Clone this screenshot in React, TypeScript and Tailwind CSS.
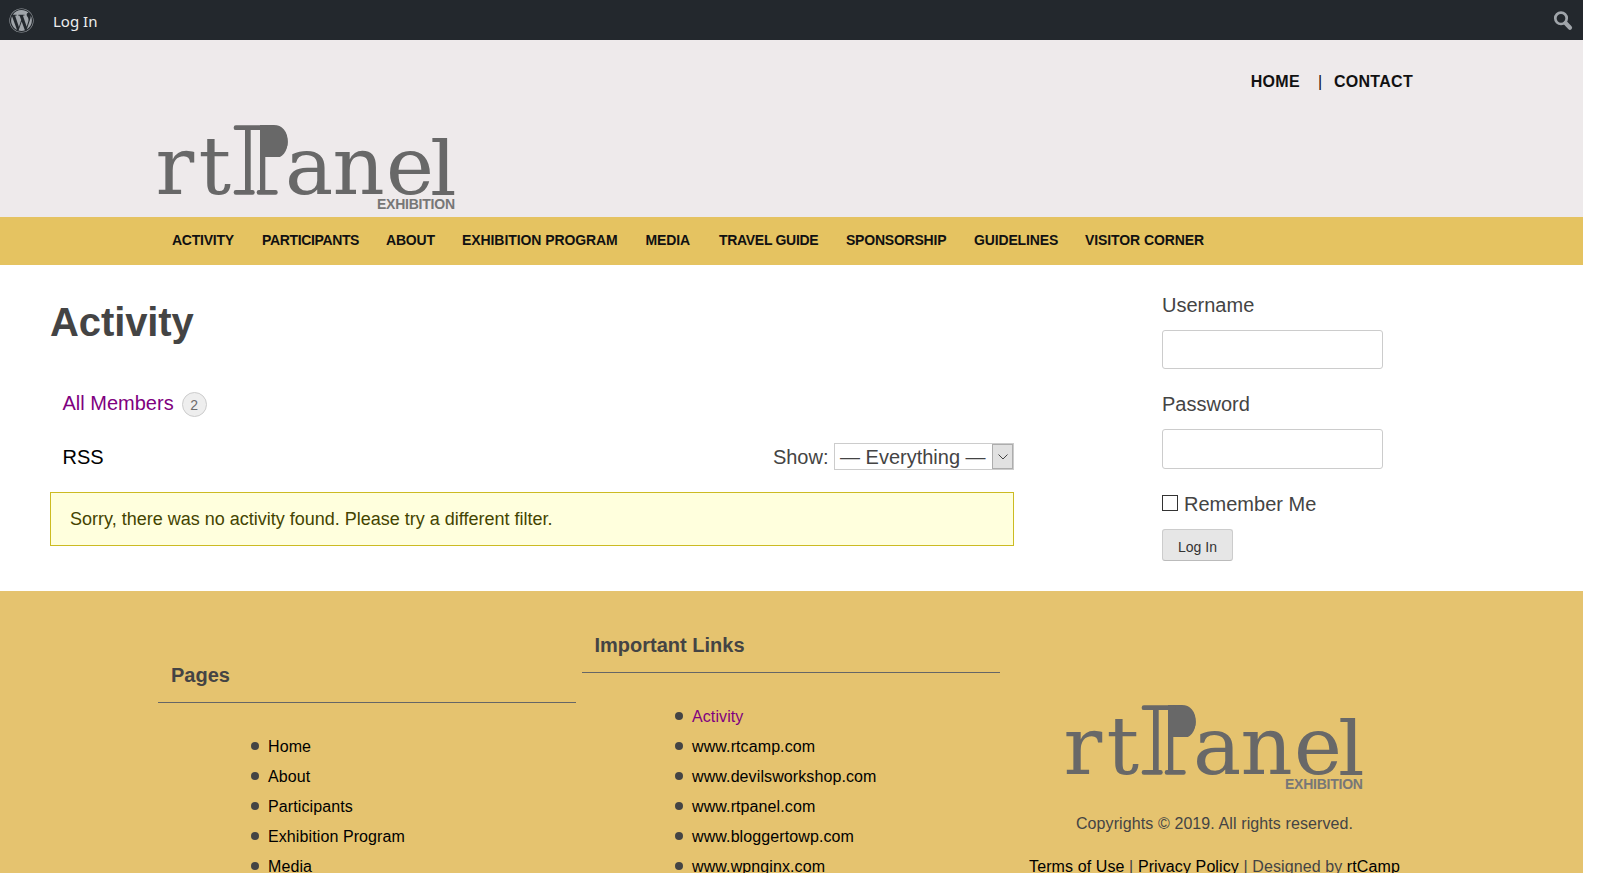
import { FaWordpress } from "react-icons/fa6";

const navItems = [
  { label: "ACTIVITY", style: "w-[90px] tracking-[-0.25px]" },
  { label: "PARTICIPANTS", style: "w-[124px] tracking-[-0.36px]" },
  { label: "ABOUT", style: "w-[76px] tracking-[-0.2px]" },
  { label: "EXHIBITION PROGRAM", style: "w-[183.5px] tracking-[-0.08px]" },
  { label: "MEDIA", style: "w-[73.5px] tracking-[-0.1px]" },
  { label: "TRAVEL GUIDE", style: "w-[127px] tracking-[-0.3px]" },
  { label: "SPONSORSHIP", style: "w-[128px] tracking-[-0.22px]" },
  { label: "GUIDELINES", style: "w-[111px] tracking-[-0.15px]" },
  { label: "VISITOR CORNER", style: "w-[130px] tracking-[-0.09px]" },
];

const pages = ["Home", "About", "Participants", "Exhibition Program", "Media"];

const links = [
  "Activity",
  "www.rtcamp.com",
  "www.devilsworkshop.com",
  "www.rtpanel.com",
  "www.bloggertowp.com",
  "www.wpnginx.com",
];

function Logo({ id }: { id: string }) {
  return (
    <svg width="298" height="86" viewBox="0 0 298 86" className="block shrink-0 overflow-visible" fill="#686868">
      <clipPath id={id}>
        <rect x="102" y="-10" width="60" height="42" />
      </clipPath>
      <g fontFamily="'DejaVu Serif', serif" fontSize="81">
        <text x="-2.5 40.5" y="69.3">rt</text>
        <text x="127 174.5 228" y="69.3">ane</text>
        <text x="0" y="0" transform="translate(272 69.5) scale(1.03 0.92)">l</text>
      </g>
      <g clipPath={`url(#${id})`}>
        <text transform="translate(92 58.8) scale(0.74 1)" fontFamily="'DejaVu Serif', serif" fontSize="80">P</text>
      </g>
      <path d="M102 0.5H112C124 0.5 129.7 8 129.7 17C129.7 26 123 31.7 112 31.7H107.3V68H102Z" />
      <rect x="75.7" y="0.3" width="34" height="4.8" rx="2.2" />
      <rect x="87" y="2" width="5.7" height="66" />
      <rect x="75.7" y="65" width="21" height="4.8" rx="2.2" />
      <rect x="98.7" y="65" width="21" height="4.8" rx="2.2" />
      <text x="219" y="84" textLength="78" fontFamily="'Liberation Sans', Arial, sans-serif" fontSize="14" fontWeight="700" fill="#777">
        EXHIBITION
      </text>
    </svg>
  );
}

function LinkList({ items }: { items: string[] }) {
  return (
    <ul className="pl-[93px] text-[16px] leading-[30px] tracking-[0.1px] text-black">
      {items.map((item) => (
        <li key={item} className="flex h-[30px] items-center">
          <span className="mb-[2px] mr-[9px] size-[8px] shrink-0 rounded-full bg-[#444]" />
          <a className={item === "Activity" ? "text-[#800080]" : "text-black"}>{item}</a>
        </li>
      ))}
    </ul>
  );
}

export default function App() {
  return (
    <div className="h-[873px] overflow-hidden bg-white font-['Liberation_Sans',Arial,sans-serif] text-[#444]">
      <div className="w-[1583px]">
        <div className="flex h-[40px] items-center bg-[#23282d] pl-[9px] pr-[9px]">
          <FaWordpress className="mt-px size-[25px] text-[#a0a5aa]" />
          <span className="ml-[19px] mt-[3px] font-['Noto_Sans',sans-serif] text-[15px] text-[#eee]">Log In</span>
          <svg className="ml-auto mt-px" width="22" height="22" viewBox="0 0 22 22" fill="none" stroke="#a0a5aa">
            <circle cx="9" cy="8.3" r="5.7" strokeWidth="2.7" />
            <path d="M13.5 13L18 17.8" strokeWidth="4.2" strokeLinecap="round" />
          </svg>
        </div>

        <header className="flex h-[177px] flex-col bg-[#eeeaeb] pl-[158px] pr-[169px]">
          <div className="flex h-[85px] justify-end pr-px pt-[32px] text-[16px] font-bold leading-[20px] tracking-[0.3px] text-[#111]">
            <span>HOME</span>
            <span className="ml-[18px] mr-[12px] w-[4px] font-normal">|</span>
            <span>CONTACT</span>
          </div>
          <Logo id="header-logo" />
        </header>

        <nav className="flex h-[48px] bg-[#e5c361] pl-[172px] text-[14px] font-bold leading-[46px] text-[#111]">
          {navItems.map((item) => (
            <a key={item.label} className={`${item.style} shrink-0 whitespace-nowrap`}>
              {item.label}
            </a>
          ))}
        </nav>

        <div className="flex h-[326px] pl-[50px]">
          <main className="w-[964px]">
            <h1 className="pt-[33px] text-[40px] font-bold leading-[48px] tracking-[-0.1px]">Activity</h1>
            <div className="mt-[42px] flex h-[30px] items-center pl-[12.5px] text-[20px] leading-[30px] text-[#800080]">
              All Members
              <span className="ml-[8px] mt-[3px] flex size-[25px] items-center justify-center rounded-full border border-[#ccc] bg-[#eee] text-[14px] text-[#6c6c6c]">
                2
              </span>
            </div>
            <div className="mt-[24px] flex h-[30px] items-center pl-[12.5px] text-[20px] leading-[30px]">
              <span className="text-black">RSS</span>
              <span className="ml-auto">Show:</span>
              <div className="ml-[5.5px] mb-px flex h-[27px] w-[180px] border border-[#ccc] pl-[5px] leading-[26px]">
                <span className="flex-1 whitespace-nowrap">— Everything —</span>
                <span className="flex h-[25px] w-[21px] items-center justify-center border border-[#adadad] bg-[#e1e1e1]">
                  <svg width="10" height="6" viewBox="0 0 10 6" fill="none" stroke="#444">
                    <path d="M0.5 0.5L5 5L9.5 0.5" />
                  </svg>
                </span>
              </div>
            </div>
            <div className="mt-[20px] h-[54px] border border-[#cb2] bg-[#ffffdd] pl-[19px] text-[18px] leading-[52px] text-[#440]">
              Sorry, there was no activity found. Please try a different filter.
            </div>
          </main>

          <aside className="ml-[148px] w-[222px] pt-[25px] text-[20px] leading-[30px]">
            <label className="block">Username</label>
            <input className="mt-[10px] block h-[39px] w-[221px] rounded-[3px] border border-[#ccc]" />
            <label className="mt-[20px] block">Password</label>
            <input className="mt-[10px] block h-[40px] w-[221px] rounded-[3px] border border-[#ccc]" />
            <label className="mt-[20px] flex h-[30px] items-center">
              <span className="mb-[2px] mr-[6px] size-[16px] border border-[#333]" />
              Remember Me
            </label>
            <button className="mt-[10px] block h-[32px] w-[71px] rounded-[3px] border border-[#ccc] border-b-[#bbb] bg-[#e6e6e6] pt-[5px] text-[14px] leading-[25px] text-[#333]">
              Log In
            </button>
          </aside>
        </div>

        <footer className="flex h-[300px] gap-[6px] bg-[#e5c36f] pl-[158px]">
          <section className="w-[418px] pt-[60px]">
            <h2 className="mb-[29px] h-[52px] border-b border-[#666] pl-[13px] pt-[9px] text-[20px] font-bold leading-[30px]">Pages</h2>
            <LinkList items={pages} />
          </section>
          <section className="w-[418px] pt-[30px]">
            <h2 className="mb-[29px] h-[52px] border-b border-[#666] pl-[12.5px] pt-[9px] text-[20px] font-bold leading-[30px]">Important Links</h2>
            <LinkList items={links} />
          </section>
          <section className="flex w-[417px] flex-col items-center pt-[114px] text-[16px] leading-[30px] tracking-[0.1px]">
            <Logo id="footer-logo" />
            <p className="mt-[18px]">Copyrights © 2019. All rights reserved.</p>
            <p className="mt-[13px] whitespace-nowrap">
              <a className="text-black">Terms of Use</a> | <a className="text-black">Privacy Policy</a> | Designed by{" "}
              <a className="text-black">rtCamp</a>
            </p>
          </section>
        </footer>
      </div>
    </div>
  );
}
